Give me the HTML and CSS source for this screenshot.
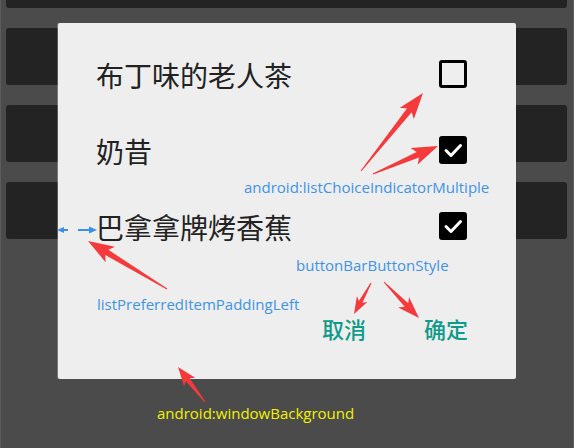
FILE: index.html
```html
<!DOCTYPE html>
<html>
<head>
<meta charset="utf-8">
<link rel="stylesheet" href="styles.css">
</head>
<body>
<div class="screen">
  <div class="bars">
    <div class="bar"></div>
    <div class="bar"></div>
    <div class="bar"></div>
    <div class="bar"></div>
  </div>

  <div class="dialog">
    <ul class="list">
      <li class="item">
        <span class="label">布丁味的老人茶</span>
        <span class="check"></span>
      </li>
      <li class="item">
        <span class="label">奶昔</span>
        <span class="check checked">
          <svg viewBox="0 0 28 28" width="28" height="28"><path d="M7 14.5 L12 19.5 L21.5 9.5" fill="none" stroke="#fff" stroke-width="3" stroke-linecap="round" stroke-linejoin="round"/></svg>
        </span>
      </li>
      <li class="item">
        <span class="label">巴拿拿牌烤香蕉</span>
        <span class="check checked">
          <svg viewBox="0 0 28 28" width="28" height="28"><path d="M7 14.5 L12 19.5 L21.5 9.5" fill="none" stroke="#fff" stroke-width="3" stroke-linecap="round" stroke-linejoin="round"/></svg>
        </span>
      </li>
    </ul>
    <div class="buttons">
      <span class="btn">取消</span>
      <span class="btn">确定</span>
    </div>
  </div>

  <svg class="notes" width="574" height="448" viewBox="0 0 574 448">
    <g class="red">
      <path transform="translate(360 171) rotate(-51.5)" d="M0,-0.5 L77.6,-3 L73.6,-9 L99.6,0 L73.6,9 L77.6,3 L0,0.5Z"/>
      <path transform="translate(372 174) rotate(-23.3)" d="M0,-0.5 L48.8,-3 L44.8,-9 L70.8,0 L44.8,9 L48.8,3 L0,0.5Z"/>
      <path transform="translate(166 289) rotate(-148.7)" d="M0,-0.5 L70.4,-3 L66.4,-9 L92.4,0 L66.4,9 L70.4,3 L0,0.5Z"/>
      <path transform="translate(204 402) rotate(-127.6)" d="M0,-0.5 L28.2,-2.5 L25.2,-7 L44.2,0 L25.2,7 L28.2,2.5 L0,0.5Z"/>
      <path transform="translate(370 283) rotate(118.7)" d="M0,-0.5 L21.4,-2 L18.4,-6 L35.4,0 L18.4,6 L21.4,2 L0,0.5Z"/>
      <path transform="translate(383 282) rotate(45.8)" d="M0,-0.5 L32.2,-2.5 L28.2,-7.5 L50.2,0 L28.2,7.5 L32.2,2.5 L0,0.5Z"/>
    </g>
    <g class="blue-arrow">
      <path d="M56 230 L63 227 L63 233 Z"/>
      <rect x="62" y="229" width="5" height="2"/>
      <rect x="77" y="229" width="12" height="2"/>
      <path d="M96 230 L88 226.5 L88 233.5 Z"/>
    </g>
    <text class="note blue" x="243" y="193">android:listChoiceIndicatorMultiple</text>
    <text class="note blue" x="295" y="271">buttonBarButtonStyle</text>
    <text class="note blue" x="96" y="310">listPreferredItemPaddingLeft</text>
    <text class="note yellow" x="156" y="419">android:windowBackground</text>
  </svg>
</div>
</body>
</html>
```

FILE: styles.css
```css
html, body {
  margin: 0;
  padding: 0;
}

body {
  width: 574px;
  height: 448px;
  overflow: hidden;
  background: #4b4b4b;
}

.screen {
  position: relative;
  width: 574px;
  height: 448px;
  box-sizing: border-box;
  border-left: 1px solid #5c5c5c;
  border-right: 1px solid #5c5c5c;
  background: #4b4b4b;
  overflow: hidden;
}

.bars {
  display: flex;
  flex-direction: column;
  gap: 20px;
  margin-top: -49px;
  padding: 0 6px 0 5px;
}

.bar {
  height: 57px;
  background: #232323;
  border-radius: 3px;
}

.dialog {
  position: absolute;
  left: 57px;
  top: 23px;
  width: 458px;
  height: 356px;
  background: #eeeeee;
  border-radius: 2px;
  box-shadow: -1px 0 0 rgba(255, 255, 255, 0.25);
  display: flex;
  flex-direction: column;
}

.list {
  list-style: none;
  margin: 0;
  padding: 14px 0 0 0;
}

.item {
  height: 76px;
  display: flex;
  align-items: center;
  justify-content: space-between;
  padding: 0 49px 0 38px;
}

.label {
  font-family: "Noto Sans CJK SC", sans-serif;
  font-size: 28px;
  line-height: 1;
  color: #222222;
}

.check {
  width: 28px;
  height: 28px;
  box-sizing: border-box;
  border: 3px solid #000;
  border-radius: 3px;
  margin-top: -2px;
}

.check.checked {
  border: none;
  background: #000;
}

.check svg {
  display: block;
}

.buttons {
  display: flex;
  justify-content: flex-end;
  gap: 58px;
  padding-right: 48px;
  margin-top: 48px;
}

.btn {
  font-family: "Noto Sans CJK SC", sans-serif;
  font-size: 22px;
  font-weight: 500;
  line-height: 30px;
  color: #0f9a8a;
}

.notes {
  position: absolute;
  left: 0;
  top: 0;
  pointer-events: none;
}

.red path {
  fill: #f43a3a;
}

.blue-arrow path,
.blue-arrow rect {
  fill: #3a8fe6;
}

.note {
  font-family: "Open Sans", sans-serif;
  font-size: 15px;
}

.note.blue {
  fill: #3f93e6;
}

.note.yellow {
  fill: #f2f200;
}
```
